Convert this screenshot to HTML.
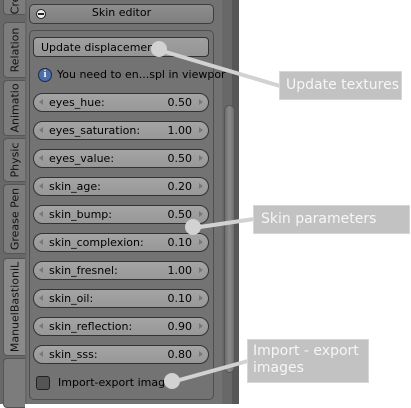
<!DOCTYPE html>
<html><head><style>
body{margin:0;width:411px;height:404px;background:#fff;position:relative;overflow:hidden;font-family:"DejaVu Sans","Liberation Sans",sans-serif;font-size:11px;color:#000}
.a{position:absolute;box-sizing:border-box}
.tab{position:absolute;left:3px;width:22px;background:#7c7c7c;border:1px solid #555;border-right:none;border-radius:4px 0 0 4px;box-sizing:border-box}
.tab span{position:absolute;left:50%;top:50%;transform:translate(-50%,-50%) rotate(-90deg);white-space:nowrap;font-size:11px;color:#111}
.sl{position:absolute;left:33px;width:176px;height:19px;border:1px solid #333;border-radius:10px;background:linear-gradient(#a4a4a4,#989898);box-sizing:border-box}
.sl .n{position:absolute;left:15px;top:2px}
.sl .v{position:absolute;right:16px;top:2px}
.sl:before{content:"";position:absolute;left:5px;top:5px;border:3px solid transparent;border-right:4px solid #777;border-left:none}
.sl:after{content:"";position:absolute;right:5px;top:5px;border:3px solid transparent;border-left:4px solid #777;border-right:none}
.co{position:absolute;background:#c2c2c2;border:1px solid #d6d6d6;color:#f6f6f6;font-size:14px;line-height:17px;padding:5px 3px 0 6px;box-sizing:border-box;white-space:nowrap}
</style></head><body>
<div class="a" style="left:0;top:0;width:27px;height:404px;background:#686868"></div>
<div class="a" style="left:27px;top:0;width:195px;height:404px;background:#727272"></div>
<div class="a" style="left:222px;top:0;width:10px;height:404px;background:#686868"></div>
<div class="a" style="left:232px;top:0;width:7px;height:404px;background:#575757"></div>
<div class="a" style="left:224px;top:105px;width:11px;height:268px;border-radius:6px;background:linear-gradient(90deg,#6e6e6e,#8a8a8a,#6e6e6e);border:1px solid #555"></div>

<div class="tab" style="top:-5px;height:20px"><span>Cre</span></div>
<div class="tab" style="top:22px;height:56px"><span>Relation</span></div>
<div class="tab" style="top:80px;height:56px"><span>Animatio</span></div>
<div class="tab" style="top:138px;height:44px"><span>Physic</span></div>
<div class="tab" style="top:184px;height:70px"><span>Grease Pen</span></div>
<div class="tab" style="top:258px;height:98px;background:#8a8a8a"><span>ManuelBastioniL</span></div>
<div class="tab" style="top:358px;height:50px"></div>

<div class="a" style="left:29px;top:4px;width:185px;height:20px;border:1px solid #3c3c3c;border-radius:5px;background:linear-gradient(#8e8e8e,#7e7e7e)"></div>
<div class="a" style="left:36px;top:9px;width:10px;height:10px;border-radius:50%;background:#eee;border:1px solid #222"></div>
<div class="a" style="left:38px;top:13px;width:6px;height:2px;background:#222"></div>
<div class="a" style="left:29px;top:6px;width:185px;text-align:center;font-size:11px">Skin editor</div>

<div class="a" style="left:29px;top:30px;width:185px;height:370px;border:1px solid #4e4e4e;border-radius:5px;background:#737373"></div>
<div class="a" style="left:33px;top:37px;width:176px;height:20px;border:1px solid #333;border-radius:4px;background:linear-gradient(#a0a0a0,#959595);padding:3px 0 0 7px">Update displacement</div>
<div class="a" style="left:38px;top:68px;width:14px;height:14px;border-radius:50%;background:#4d6fa8;border:1px solid #1c2b4c;color:#fff;font-size:10px;font-weight:bold;text-align:center;line-height:12px;font-family:'Liberation Serif',serif">i</div>
<div class="a" style="left:57px;top:68px">You need to en...spl in viewpor</div>

<div class="sl" style="top:93px"><span class="n">eyes_hue:</span><span class="v">0.50</span></div>
<div class="sl" style="top:121px"><span class="n">eyes_saturation:</span><span class="v">1.00</span></div>
<div class="sl" style="top:149px"><span class="n">eyes_value:</span><span class="v">0.50</span></div>
<div class="sl" style="top:177px"><span class="n">skin_age:</span><span class="v">0.20</span></div>
<div class="sl" style="top:205px"><span class="n">skin_bump:</span><span class="v">0.50</span></div>
<div class="sl" style="top:233px"><span class="n">skin_complexion:</span><span class="v">0.10</span></div>
<div class="sl" style="top:261px"><span class="n">skin_fresnel:</span><span class="v">1.00</span></div>
<div class="sl" style="top:289px"><span class="n">skin_oil:</span><span class="v">0.10</span></div>
<div class="sl" style="top:317px"><span class="n">skin_reflection:</span><span class="v">0.90</span></div>
<div class="sl" style="top:345px"><span class="n">skin_sss:</span><span class="v">0.80</span></div>

<div class="a" style="left:36px;top:376px;width:14px;height:14px;border:1px solid #222;border-radius:3px;background:#555"></div>
<div class="a" style="left:58px;top:376px">Import-export images</div>

<svg class="a" style="left:0;top:0" width="411" height="404">
<g stroke="#d2d2d2" stroke-width="4" fill="#d2d2d2">
<line x1="159" y1="50" x2="280" y2="86"/>
<line x1="193" y1="228" x2="254" y2="219"/>
<line x1="172" y1="382" x2="248" y2="361"/>
<circle cx="159" cy="49" r="8" stroke="none"/>
<circle cx="193" cy="227" r="8" stroke="none"/>
<circle cx="172" cy="381" r="8" stroke="none"/>
</g></svg>
<div class="co" style="left:279px;top:71px;width:123px;height:29px">Update textures</div>
<div class="co" style="left:253px;top:205px;width:157px;height:29px;padding-left:7px">Skin parameters</div>
<div class="co" style="left:247px;top:339px;width:122px;height:44px;padding-top:3px;padding-left:5px;white-space:normal">Import - export images</div>
</body></html>
